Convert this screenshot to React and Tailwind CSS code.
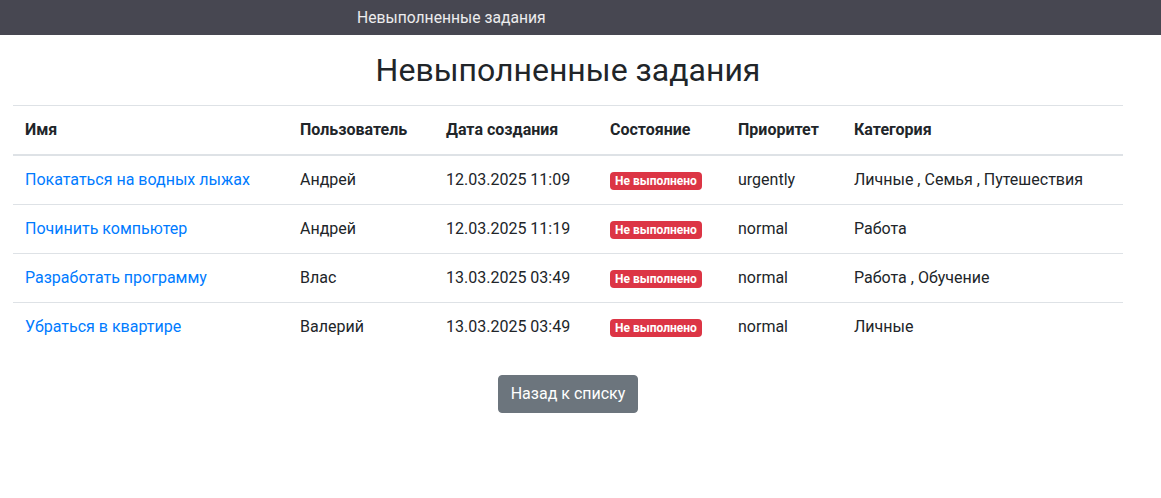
import React from 'react';

const tasks = [
  { name: 'Покататься на водных лыжах', user: 'Андрей', date: '12.03.2025 11:09', priority: 'urgently', cats: ['Личные', 'Семья', 'Путешествия'] },
  { name: 'Починить компьютер', user: 'Андрей', date: '12.03.2025 11:19', priority: 'normal', cats: ['Работа'] },
  { name: 'Разработать программу', user: 'Влас', date: '13.03.2025 03:49', priority: 'normal', cats: ['Работа', 'Обучение'] },
  { name: 'Убраться в квартире', user: 'Валерий', date: '13.03.2025 03:49', priority: 'normal', cats: ['Личные'] },
];

export default function App() {
  return (
    <div className="min-h-[498px] bg-white text-[#212529] text-base leading-6 font-['Roboto','Liberation_Sans',sans-serif]">
      {/* top bar */}
      <nav className="h-[35px] bg-[#474751] flex items-center">
        <span className="ml-[357px] text-white/90 text-[15.7px]">Невыполненные задания</span>
      </nav>

      <div className="w-[1110px] ml-[13px]">
        <h2 className="text-center text-[32px] leading-[38px] font-normal mt-[16px] mb-[16px]">Невыполненные задания</h2>

        <table className="w-full table-fixed border-collapse">
          <colgroup>
            <col className="w-[275px]" />
            <col className="w-[146px]" />
            <col className="w-[164px]" />
            <col className="w-[128px]" />
            <col className="w-[116px]" />
            <col />
          </colgroup>
          <thead>
            <tr className="text-left">
              <th className="p-3 border-t border-[#dee2e6] border-b-2 font-bold">Имя</th>
              <th className="p-3 border-t border-[#dee2e6] border-b-2 font-bold">Пользователь</th>
              <th className="p-3 border-t border-[#dee2e6] border-b-2 font-bold">Дата создания</th>
              <th className="p-3 border-t border-[#dee2e6] border-b-2 font-bold">Состояние</th>
              <th className="p-3 border-t border-[#dee2e6] border-b-2 font-bold">Приоритет</th>
              <th className="p-3 border-t border-[#dee2e6] border-b-2 font-bold">Категория</th>
            </tr>
          </thead>
          <tbody>
            {tasks.map((t, i) => (
              <tr key={i} className={i > 0 ? 'border-t border-[#dee2e6]' : ''}>
                <td className="p-3"><a className="text-[#007bff]">{t.name}</a></td>
                <td className="p-3">{t.user}</td>
                <td className="p-3">{t.date}</td>
                <td className="p-3">
                  <span className="inline-block bg-[#dc3545] text-white text-xs font-bold leading-none px-[5px] py-[3px] rounded align-[0px]">Не выполнено</span>
                </td>
                <td className="p-3">{t.priority}</td>
                <td className="p-3">{t.cats.join(' , ')}</td>
              </tr>
            ))}
          </tbody>
        </table>

        <div className="flex justify-center mt-6">
          <button className="bg-[#6c757d] border border-[#6c757d] text-white text-base leading-6 px-3 py-1.5 rounded">Назад к списку</button>
        </div>
      </div>
    </div>
  );
}
